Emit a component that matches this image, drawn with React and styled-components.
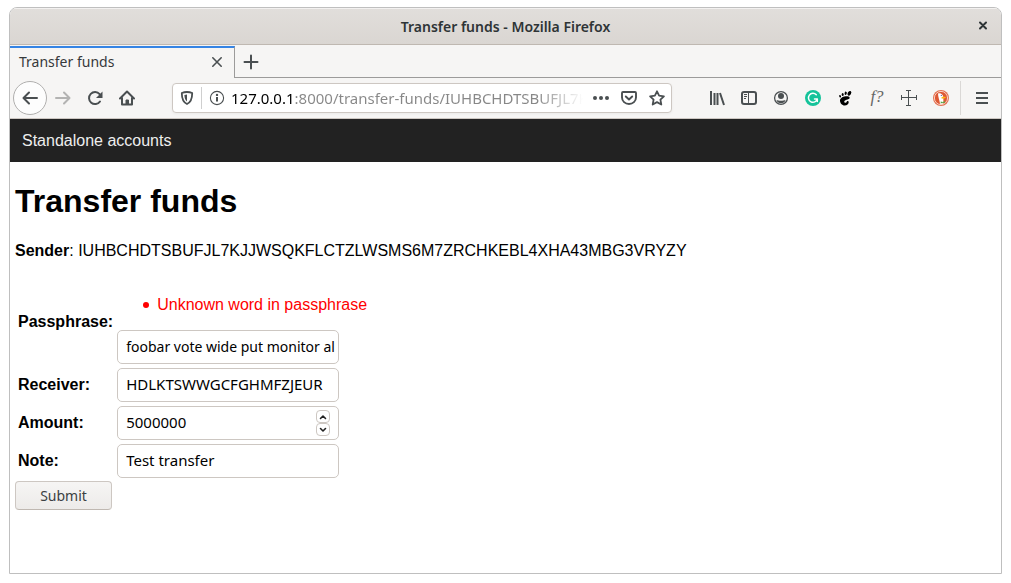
import React, { useRef } from "react";
import styled, { createGlobalStyle, css } from "styled-components";

const uiFont = `"Noto Sans", "Open Sans", sans-serif`;
const pageFont = `"Liberation Sans", Arial, sans-serif`;

const GlobalStyle = createGlobalStyle`
  *, *::before, *::after { box-sizing: border-box; }
  body { margin: 0; background: #fff; color: #000; font-family: ${pageFont}; font-size: 16px; line-height: 18px; }
  button, input { margin: 0; font: inherit; color: inherit; }
`;

const Desktop = styled.div`
  display: flex;
  min-height: 100vh;
  padding: 7px 9px 9px;
`;

const Window = styled.div`
  display: flex;
  flex: 1;
  flex-direction: column;
  min-width: 0;
  overflow: hidden;
  border: 1px solid #bfbfbf;
  border-radius: 8px 8px 0 0;
  background: #fff;
`;

const TitleBar = styled.header`
  display: grid;
  grid-template-columns: 36px 1fr 36px;
  align-items: center;
  height: 37px;
  border-bottom: 1px solid #bfb8b1;
  background: linear-gradient(#e1dedb, #dad6d2);
  box-shadow: inset 0 1px #f3f1f0;
  color: #2e3436;
  font: 600 14px/20px ${uiFont};
  text-align: center;
`;

const WindowTitle = styled.span`
  grid-column: 2;
  padding-top: 2px;
`;

const IconButton = styled.button`
  display: flex;
  flex: none;
  align-items: center;
  justify-content: center;
  width: ${({ $width = 32 }) => $width}px;
  height: 32px;
  padding: 0;
  border: 0;
  background: none;
  color: ${({ $muted }) => ($muted ? "#b3b3b2" : "#4a4f51")};
  svg { display: block; flex: none; }
`;

const BackButton = styled(IconButton)`
  width: 34px;
  height: 34px;
  border: 1px solid #b0afae;
  border-radius: 50%;
  background: #fdfdfd;
`;

const TabStrip = styled.div`
  display: flex;
  height: 33px;
  padding-top: 1px;
  background: #f6f5f4;
`;

const Tab = styled.div`
  display: flex;
  align-items: center;
  justify-content: space-between;
  width: 225px;
  padding: 0 0 2px 9px;
  border-top: 2px solid #3584e4;
  border-right: 1px solid #9c9b9a;
  color: #36393b;
  font: 14px/20px ${uiFont};
`;

const TabRest = styled.div`
  display: flex;
  flex: 1;
  align-items: center;
  border-bottom: 1px solid #9c9b9a;
`;

const Toolbar = styled.div`
  display: flex;
  align-items: center;
  height: 41px;
  padding: 0 3px;
  border-bottom: 1px solid #cdc7c2;
  background: #f6f5f4;
`;

const UrlBar = styled.div`
  display: flex;
  flex: 1;
  align-items: center;
  min-width: 0;
  height: 30px;
  margin: 0 29px;
  border: 1px solid #cdc7c2;
  border-radius: 4px;
  background: #fff;
  box-shadow: 0 1px 3px #0000000d;
`;

const UrlDivider = styled.span`
  width: 1px;
  height: 22px;
  background: #cfcfcf;
`;

const UrlInput = styled.input`
  flex: 1;
  min-width: 0;
  height: 28px;
  padding: 0;
  border: 0;
  outline: 0;
  background: linear-gradient(
    to right, #000 63px, #878787 63px,
    #878787 calc(100% - 50px), #87878700 calc(100% - 4px)
  );
  background-clip: text;
  color: transparent;
  font: 15px/20px ${uiFont};
`;

const ToolbarDivider = styled.span`
  width: 1px;
  height: 34px;
  margin: 0 5px 0 3px;
  background: #dad8d6;
`;

const Glyph = styled.span`
  padding-bottom: 2px;
  color: #666;
  font: italic 17px/20px "Liberation Serif", serif;
`;

const SiteNav = styled.nav`
  display: flex;
  align-items: center;
  height: 43px;
  padding: 0 12px;
  background: #222;
`;

const NavLink = styled.a`
  color: #eee;
  text-decoration: none;
`;

const Page = styled.main`
  flex: 1;
  padding: 0 5px;
`;

const Heading = styled.h1`
  margin: 21px 0 23px;
  font-size: 32px;
  line-height: 36px;
`;

const Sender = styled.p`
  margin: 0 0 17px;
  overflow-wrap: anywhere;
`;

const FormTable = styled.table`
  border-spacing: 2px;
  th, td { padding: 1px; text-align: left; vertical-align: middle; }
`;

const ErrorList = styled.ul`
  margin: 16px 0;
  padding-left: 40px;
  color: #f00;
  list-style: none;
  li::before {
    content: "";
    display: inline-block;
    width: 6px;
    height: 6px;
    margin: 0 8px 2px -14px;
    border-radius: 50%;
    background: currentColor;
  }
`;

const box = css`
  width: 222px;
  height: 34px;
  border: 1px solid #cdc7c2;
  border-radius: 5px;
  background: #fff;
`;

const TextField = styled.input`
  ${box}
  display: block;
  padding: 0 0 2px 8px;
  outline: 0;
  font: ${({ $long }) => ($long ? 14 : 15)}px/20px ${uiFont};
`;

const NumberBox = styled.div`
  ${box}
  display: flex;
  align-items: center;
  padding: 0 8px;
`;

const NumberInput = styled.input`
  flex: 1;
  min-width: 0;
  padding: 0 0 2px;
  border: 0;
  outline: 0;
  background: none;
  appearance: textfield;
  font: 15px/20px ${uiFont};
  &::-webkit-inner-spin-button, &::-webkit-outer-spin-button { margin: 0; appearance: none; }
`;

const Stepper = styled.div`
  display: flex;
  flex-direction: column;
`;

const StepButton = styled.button`
  display: flex;
  align-items: center;
  justify-content: center;
  width: 14px;
  height: 13px;
  padding: 0;
  border: 1px solid #cdc7c2;
  border-radius: 4px;
  background: #fff;
`;

const SubmitButton = styled.button`
  width: 97px;
  height: 29px;
  padding: 0;
  border: 1px solid #cdc7c2;
  border-bottom-color: #bfb8b1;
  border-radius: 4px;
  background: linear-gradient(#f6f5f4, #edebe9);
  color: #3b4042;
  font: 14px/20px ${uiFont};
`;

const Icon = ({ size = 16, children, sw = 2 }) => (
  <svg width={size} height={size} viewBox={`0 0 ${size} ${size}`} fill="none" stroke="currentColor"
    strokeWidth={sw} strokeLinecap="round" strokeLinejoin="round" aria-hidden="true">
    {children}
  </svg>
);

const CloseBold = () => <Icon sw={2}><path d="M5 4.5l6 6M11 4.5l-6 6" stroke="#2e3436" /></Icon>;
const CloseTab = () => <Icon sw={1.6}><path d="M3.800 3.800l8.400 8.400M12.200 3.800l-8.400 8.400" /></Icon>;
const Plus = () => <Icon><path d="M8 1.500v13M1.500 8h13" /></Icon>;
const Back = () => <Icon><path d="M15 8H1.800M7 2.500L1.500 8 7 13.500" /></Icon>;
const Forward = () => <Icon><path d="M1 8h13.200M9 2.500L14.500 8 9 13.500" /></Icon>;
const Reload = () => (
  <Icon>
    <path d="M13 11.500A6 6 0 1 1 12.600 4.200" />
    <path d="M15.500 1.500v6.500H9z" fill="currentColor" stroke="none" />
  </Icon>
);
const Home = () => (
  <Icon>
    <path d="M1 8.500L8 1.500l7 7M3 8v6.500h10V8" />
    <path d="M7 14v-4h2.500v4z" fill="currentColor" strokeWidth="1" />
  </Icon>
);
const Shield = () => (
  <Icon sw={1.8}>
    <path d="M8 2c2 0 3.800.400 5.200 1 0 5-.700 9-5.200 11C3.500 12 2.800 8 2.800 3 4.200 2.400 6 2 8 2z" />
    <path d="M8 4.600v6.800C6 10 5.500 8 5.400 5z" fill="currentColor" stroke="none" />
  </Icon>
);
const Info = () => (
  <Icon sw={1.1}>
    <circle cx="8" cy="8" r="6.600" />
    <path d="M8 7v4.500" strokeWidth="2" strokeLinecap="butt" />
    <circle cx="8" cy="4.900" r="1.200" fill="currentColor" stroke="none" />
  </Icon>
);
const Dots = () => (
  <Icon>
    <g fill="currentColor" stroke="none"><circle cx="2" cy="8" r="2" /><circle cx="8" cy="8" r="2" /><circle cx="14" cy="8" r="2" /></g>
  </Icon>
);
const Pocket = () => (
  <Icon sw={1.9}>
    <path d="M2 2h12a1 1 0 0 1 1 1v4.500a7 6.500 0 0 1-14 0V3a1 1 0 0 1 1-1z" />
    <path d="M4.800 6.500L8 9.500l3.200-3" />
  </Icon>
);
const Star = () => (
  <Icon sw={1.8}>
    <path d="M8 1.300l2.100 4.400 4.800.600-3.500 3.300.900 4.900L8 12.100l-4.300 2.400.900-4.900L1.100 6.300l4.800-.600z" />
  </Icon>
);
const Library = () => (
  <Icon>
    <path d="M2 1v14M5.500 3v12M8.500 3v12M11 3l4 12" strokeLinecap="butt" />
  </Icon>
);
const Sidebar = () => (
  <Icon>
    <rect x="1" y="2" width="14" height="12" rx="2" />
    <path d="M7.500 2v12M3 4.500h3M3 6.500h3M3 8.500h2" strokeWidth="1" strokeLinecap="butt" />
  </Icon>
);
const Account = () => (
  <Icon sw={1.3}>
    <circle cx="8" cy="8" r="6.400" />
    <g fill="currentColor" stroke="none"><circle cx="8" cy="6" r="3" /><path d="M3.500 10c2 1 7 1 9 0-.500 2.200-2.500 3.300-4.500 3.300S4 12.200 3.500 10z" /></g>
  </Icon>
);
const Grammarly = () => (
  <Icon sw={1.5}>
    <circle cx="8" cy="8" r="8" fill="#15c39a" stroke="none" />
    <path d="M11.300 4.800A4.500 4.500 0 1 0 12.300 9H9.500M12.300 9v2.500" stroke="#fff" />
  </Icon>
);
const Foot = () => (
  <Icon>
    <g fill="#000" stroke="none">
      <ellipse cx="12.400" cy="3.300" rx="1.700" ry="2.500" transform="rotate(28 12.400 3.300)" />
      <ellipse cx="8.700" cy="3.300" rx="1.100" ry="1.700" transform="rotate(12 8.700 3.300)" />
      <ellipse cx="5.700" cy="4.500" rx="1" ry="1.500" />
      <ellipse cx="3.100" cy="6.200" rx=".9" ry="1.300" transform="rotate(-18 3.100 6.200)" />
      <path d="M12.500 7.200C11 5.200 3 6.500 3 10.500c0 2.500 2 5 4.700 5 2.400 0 4-1.400 4-3.200 0-1-.700-1.500-1.400-1.300-.900.300-.400 1.600-1.700 1.800-1 .100-1.600-.700-1.300-1.600.600-1.700 6.400-1.600 5.200-4z" />
    </g>
  </Icon>
);
const Crosshair = () => (
  <Icon sw={1}>
    <path d="M7.500 .5v15M.5 7.500h15M5 .5h5M5 15.500h5M.5 5v5M15.500 5v5" strokeLinecap="butt" />
  </Icon>
);
const Duck = () => (
  <Icon>
    <circle cx="8" cy="8" r="8" fill="#e37151" stroke="none" />
    <circle cx="8" cy="8" r="6.600" fill="#de5833" stroke="#f7cfc3" strokeWidth="1" />
    <g stroke="none">
      <path d="M5 3.500c2-1 5 .200 5.300 3.500l.200 6.500c-1 .500-2.500.500-3.500.200C6.500 10 5 7 5 3.500z" fill="#fff" />
      <path d="M8.500 7.300c1-.500 3-.600 4.500-.200-.500 1.500-3 1.600-4.300 1.700z" fill="#fdb813" />
      <path d="M7.700 11.500l2 .500 2-1v2.300l-2-.600-2 .800z" fill="#57a845" />
      <circle cx="8.300" cy="5.300" r=".6" fill="#2d4f8e" />
    </g>
  </Icon>
);
const Menu = () => <Icon><path d="M2 3h12M2 8h12M2 13h12" strokeLinecap="butt" /></Icon>;
const Chevron = ({ down }) => (
  <Icon size={8} sw={1.6}><path d={down ? "M1.500 2.500L4 5l2.500-2.500" : "M1.500 5.500L4 3l2.500 2.500"} stroke="#222" /></Icon>
);

const extensions = [
  ["Library", <Library />],
  ["Sidebars", <Sidebar />],
  ["Account", <Account />],
  ["Grammarly", <Grammarly />],
  ["GNOME Shell integration", <Foot />],
  ["Fonts", <Glyph>f?</Glyph>],
  ["Measure", <Crosshair />],
  ["DuckDuckGo", <Duck />],
];

const Row = ({ id, label, children }) => (
  <tr>
    <th scope="row"><label htmlFor={id}>{label}:</label></th>
    <td>{children}</td>
  </tr>
);

export default function App() {
  const amount = useRef(null);
  return (
    <Desktop>
      <GlobalStyle />
      <Window>
        <TitleBar>
          <WindowTitle>Transfer funds - Mozilla Firefox</WindowTitle>
          <IconButton $width={36} aria-label="Close window"><CloseBold /></IconButton>
        </TitleBar>
        <TabStrip>
          <Tab>
            Transfer funds
            <IconButton $width={34} aria-label="Close tab"><CloseTab /></IconButton>
          </Tab>
          <TabRest>
            <IconButton aria-label="New tab"><Plus /></IconButton>
          </TabRest>
        </TabStrip>
        <Toolbar>
          <BackButton aria-label="Back"><Back /></BackButton>
          <IconButton $muted aria-label="Forward"><Forward /></IconButton>
          <IconButton aria-label="Reload"><Reload /></IconButton>
          <IconButton aria-label="Home"><Home /></IconButton>
          <UrlBar>
            <IconButton $width={28} aria-label="Tracking protection"><Shield /></IconButton>
            <UrlDivider />
            <IconButton $width={29} aria-label="Site information"><Info /></IconButton>
            <UrlInput aria-label="Address" defaultValue="127.0.0.1:8000/transfer-funds/IUHBCHDTSBUFJL7KJJWSQKFLCTZLWSMS6M7ZRCHKEBL4XHA43MBG3VRYZY" />
            <IconButton $width={28} aria-label="Page actions"><Dots /></IconButton>
            <IconButton $width={28} aria-label="Save to Pocket"><Pocket /></IconButton>
            <IconButton $width={28} aria-label="Bookmark"><Star /></IconButton>
          </UrlBar>
          {extensions.map(([name, icon]) => (
            <IconButton key={name} aria-label={name}>{icon}</IconButton>
          ))}
          <ToolbarDivider />
          <IconButton aria-label="Menu"><Menu /></IconButton>
        </Toolbar>
        <SiteNav><NavLink href="#">Standalone accounts</NavLink></SiteNav>
        <Page>
          <Heading>Transfer funds</Heading>
          <Sender><b>Sender</b>: IUHBCHDTSBUFJL7KJJWSQKFLCTZLWSMS6M7ZRCHKEBL4XHA43MBG3VRYZY</Sender>
          <form onSubmit={(e) => e.preventDefault()}>
            <FormTable>
              <tbody>
                <Row id="passphrase" label="Passphrase">
                  <ErrorList><li>Unknown word in passphrase</li></ErrorList>
                  <TextField id="passphrase" $long defaultValue="foobar vote wide put monitor al" />
                </Row>
                <Row id="receiver" label="Receiver">
                  <TextField id="receiver" defaultValue="HDLKTSWWGCFGHMFZJEUR" />
                </Row>
                <Row id="amount" label="Amount">
                  <NumberBox>
                    <NumberInput id="amount" ref={amount} type="number" defaultValue="5000000" />
                    <Stepper>
                      <StepButton type="button" aria-label="Increase" onClick={() => amount.current.stepUp()}><Chevron /></StepButton>
                      <StepButton type="button" aria-label="Decrease" onClick={() => amount.current.stepDown()}><Chevron down /></StepButton>
                    </Stepper>
                  </NumberBox>
                </Row>
                <Row id="note" label="Note">
                  <TextField id="note" defaultValue="Test transfer" />
                </Row>
              </tbody>
            </FormTable>
            <SubmitButton>Submit</SubmitButton>
          </form>
        </Page>
      </Window>
    </Desktop>
  );
}
